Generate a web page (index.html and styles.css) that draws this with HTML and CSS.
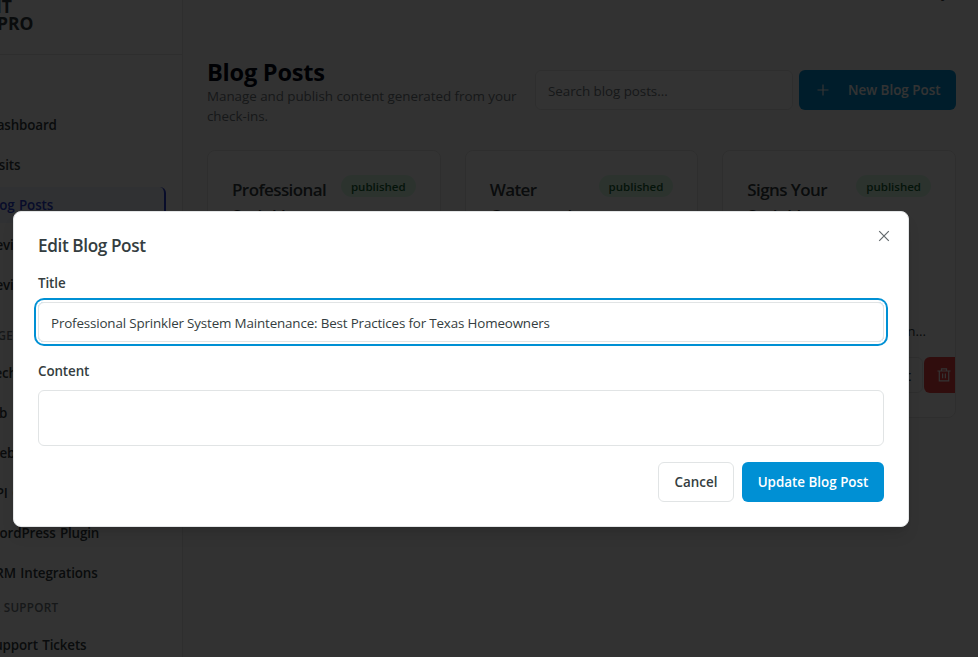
FILE: index.html
```html
<!DOCTYPE html>
<html lang="en">
<head>
<meta charset="utf-8">
<title>Blog Posts</title>
<link rel="stylesheet" href="styles.css">
</head>
<body>
<div class="app">
  <aside class="sidebar">
    <div class="brand"><span>RANK IT</span><span>PRO</span></div>
    <nav class="nav">
      <a><span>Dashboard</span></a>
      <a><span>Visits</span></a>
      <a class="active"><span>Blog Posts</span></a>
      <a><span>Reviews</span></a>
      <a><span>Reviews</span></a>
      <h4 class="first">MANAGEMENT</h4>
      <a><span>Technicians</span></a>
      <a><span>Job&nbsp; Types</span></a>
      <a><span>Website</span></a>
      <a><span>API Credentials</span></a>
      <a><span>WordPress Plugin</span></a>
      <a><span>CRM Integrations</span></a>
      <h4>HELP &amp; SUPPORT</h4>
      <a><span>Support Tickets</span></a>
    </nav>
  </aside>
  <main class="main">
    <div class="topbar"><span>Henry</span></div>
    <header class="head">
      <div class="intro">
        <h1><span>Blog Posts</span></h1>
        <p><span>Manage and publish content generated from your</span><br><span>check-ins.</span></p>
      </div>
      <div class="search"><span>Search blog posts...</span></div>
      <div class="new">
        <svg width="16" height="16" viewBox="0 0 16 16"><path d="M8 2.5v11M2.5 8h11"/></svg>
        <span>New Blog Post</span>
      </div>
    </header>
    <section class="cards">
      <article class="card">
        <div class="cardtop"><h3>Professional<br>Sprinkler</h3><span class="badge">published</span></div>
      </article>
      <article class="card">
        <div class="cardtop"><h3>Water<br>Conservation</h3><span class="badge">published</span></div>
      </article>
      <article class="card">
        <div class="cardtop"><h3>Signs Your<br>Sprinkler</h3><span class="badge">published</span></div>
        <p class="excerpt">maintain...</p>
        <div class="actions">
          <span class="edit">Edit</span>
          <span class="trash"><svg width="16" height="16" viewBox="0 0 16 16"><path d="M1.5 4h13M3.3 4v9.8h9.4V4M5.5 4V1.8h5V4M6.6 6.6v4.6M9.4 6.6v4.6"/></svg></span>
        </div>
      </article>
    </section>
  </main>
</div>
<div class="overlay"></div>
<div class="dialog" role="dialog">
  <svg class="close" width="12" height="12" viewBox="0 0 12 12"><path d="M1.2 1.2l9.6 9.6M10.8 1.2l-9.6 9.6"/></svg>
  <h2><span>Edit Blog Post</span></h2>
  <label><span>Title</span></label>
  <div class="field focus"><span>Professional Sprinkler System Maintenance: Best Practices for Texas Homeowners</span></div>
  <label class="second"><span>Content</span></label>
  <div class="area"></div>
  <div class="buttons">
    <button class="cancel"><span>Cancel</span></button>
    <button class="update"><span>Update Blog Post</span></button>
  </div>
</div>
</body>
</html>
```
FILE: styles.css
```css
* { box-sizing: border-box; }
html, body { margin: 0; height: 657px; overflow: hidden; }
body { font: 13.4px/20px "Open Sans", "Noto Sans", sans-serif; color: #343d40; background: #fafafa; }
h1, h2, h3, h4, p { margin: 0; }
svg { fill: none; stroke: currentColor; stroke-width: 1.2; flex: none; }
span { white-space: nowrap; }

.app { display: flex; width: 978px; height: 657px; overflow: hidden; }
.sidebar { flex: none; width: 256px; margin-left: -73px; background: #fff; border-right: 1px solid #e6e6e6; }
.brand { height: 55px; padding-left: 70px; border-bottom: 1px solid #e6e6e6; font: 700 17.5px/17px "Open Sans", sans-serif; }
.brand span { display: block; }
.brand span:first-child { width: 15px; height: 15px; line-height: 13px; display: flex; justify-content: flex-end; }
.nav { padding: 52px 16px 0; display: flex; flex-direction: column; gap: 4px; }
.nav a { height: 36px; flex: none; padding-left: 44px; display: flex; align-items: center; font-weight: 600; letter-spacing: -.13px; word-spacing: 1px; border-radius: 6px; }
.nav .active { background: #eff6ff; color: #2a3fd0; border-right: 2px solid #2a3fd0; }
.nav h4 { flex: none; height: 30px; line-height: 27px; padding-left: 15px; margin: -1px 0; font-size: 11.7px; font-weight: 600; letter-spacing: .3px; color: #70787d; white-space: nowrap; }
.nav h4.first { height: 46px; line-height: 58px; padding-left: 18px; }

.main { flex: none; width: 795px; padding: 0 22px 0 24px; }
.topbar { height: 59px; display: flex; justify-content: flex-end; padding-right: 8px; }
.topbar span { margin-top: -17px; font-weight: 600; letter-spacing: -.1px; }
.head { height: 91px; display: flex; align-items: flex-start; }
.intro { width: 328px; }
.intro h1 { font-size: 23.6px; line-height: 26px; letter-spacing: -.25px; color: #020817; }
.intro p { padding-top: 1px; color: #70787d; letter-spacing: -.04px; }
.search { width: 258px; height: 40px; margin: 11px 6px 0 0; padding: 10px 12px; border: 1px solid #e6e6e6; border-radius: 6px; background: #fff; color: #70787d; letter-spacing: -.05px; }
.new { width: 157px; height: 40px; margin-top: 11px; padding: 0 16px; display: flex; align-items: center; gap: 17px; border-radius: 6px; background: #0090d4; color: #fff; font-weight: 600; }
.cards { display: grid; grid-template-columns: repeat(3, 1fr); gap: 24px; }
.card { min-width: 0; height: 268px; border: 1px solid #e6e6e6; border-radius: 8px; background: #fff; padding: 24px; overflow: hidden; }
.cardtop { height: 154px; display: flex; justify-content: space-between; align-items: flex-start; }
.card h3 { width: 108px; font-size: 17px; line-height: 26px; padding-top: 2px; font-weight: 600; letter-spacing: -.58px; }
.badge { height: 22px; line-height: 23px; padding: 0 10px; border-radius: 11px; background: #dcfce7; color: #166534; font-size: 11.5px; font-weight: 600; }
.excerpt { margin-top: -8px; text-align: right; padding-right: 5px; }
.actions { display: flex; justify-content: flex-end; gap: 1px; margin: 16px -24px 0 0; }
.edit { width: 70px; height: 36px; padding: 8px 11px; border: 1px solid #e6e6e6; border-radius: 6px; text-align: right; font-weight: 600; }
.trash { width: 31px; height: 36px; padding: 10px 0 0 12px; background: #ef4444; color: #fff; border-radius: 6px 0 0 6px; }

.overlay { position: absolute; inset: 0; background: rgba(0, 0, 0, .8); }
.dialog { position: absolute; left: 13px; top: 211px; width: 896px; height: 316px; padding: 24px; border: 1px solid #e3e5e6; border-radius: 8px; background: #fff; box-shadow: 0 10px 15px -3px rgba(0, 0, 0, .1), 0 4px 6px -4px rgba(0, 0, 0, .1); }
.close { position: absolute; right: 18px; top: 18px; color: #62696c; }
.dialog h2 { font-size: 17.2px; line-height: 19px; font-weight: 600; letter-spacing: -.4px; }
.dialog label { display: block; margin-top: 18px; line-height: 20px; font-weight: 600; letter-spacing: -.1px; }
.dialog .second { margin-top: 19px; }
.field { height: 40px; margin-top: 9px; padding: 10px 12px; border: 1px solid #e1e4e5; border-radius: 6px; letter-spacing: -.16px; }
.focus { box-shadow: 0 0 0 2px #fff, 0 0 0 4px #0090d4; }
.area { height: 56px; margin-top: 9px; border: 1px solid #e1e4e5; border-radius: 6px; }
.buttons { display: flex; justify-content: flex-end; gap: 8px; margin-top: 16px; }
button { height: 40px; padding: 0; border-radius: 6px; font: 600 13.4px/20px "Open Sans", "Noto Sans", sans-serif; color: inherit; }
.cancel { width: 76px; background: #fff; border: 1px solid #e1e4e5; }
.update { width: 142px; background: #0090d4; border: 0; color: #fff; }
```
